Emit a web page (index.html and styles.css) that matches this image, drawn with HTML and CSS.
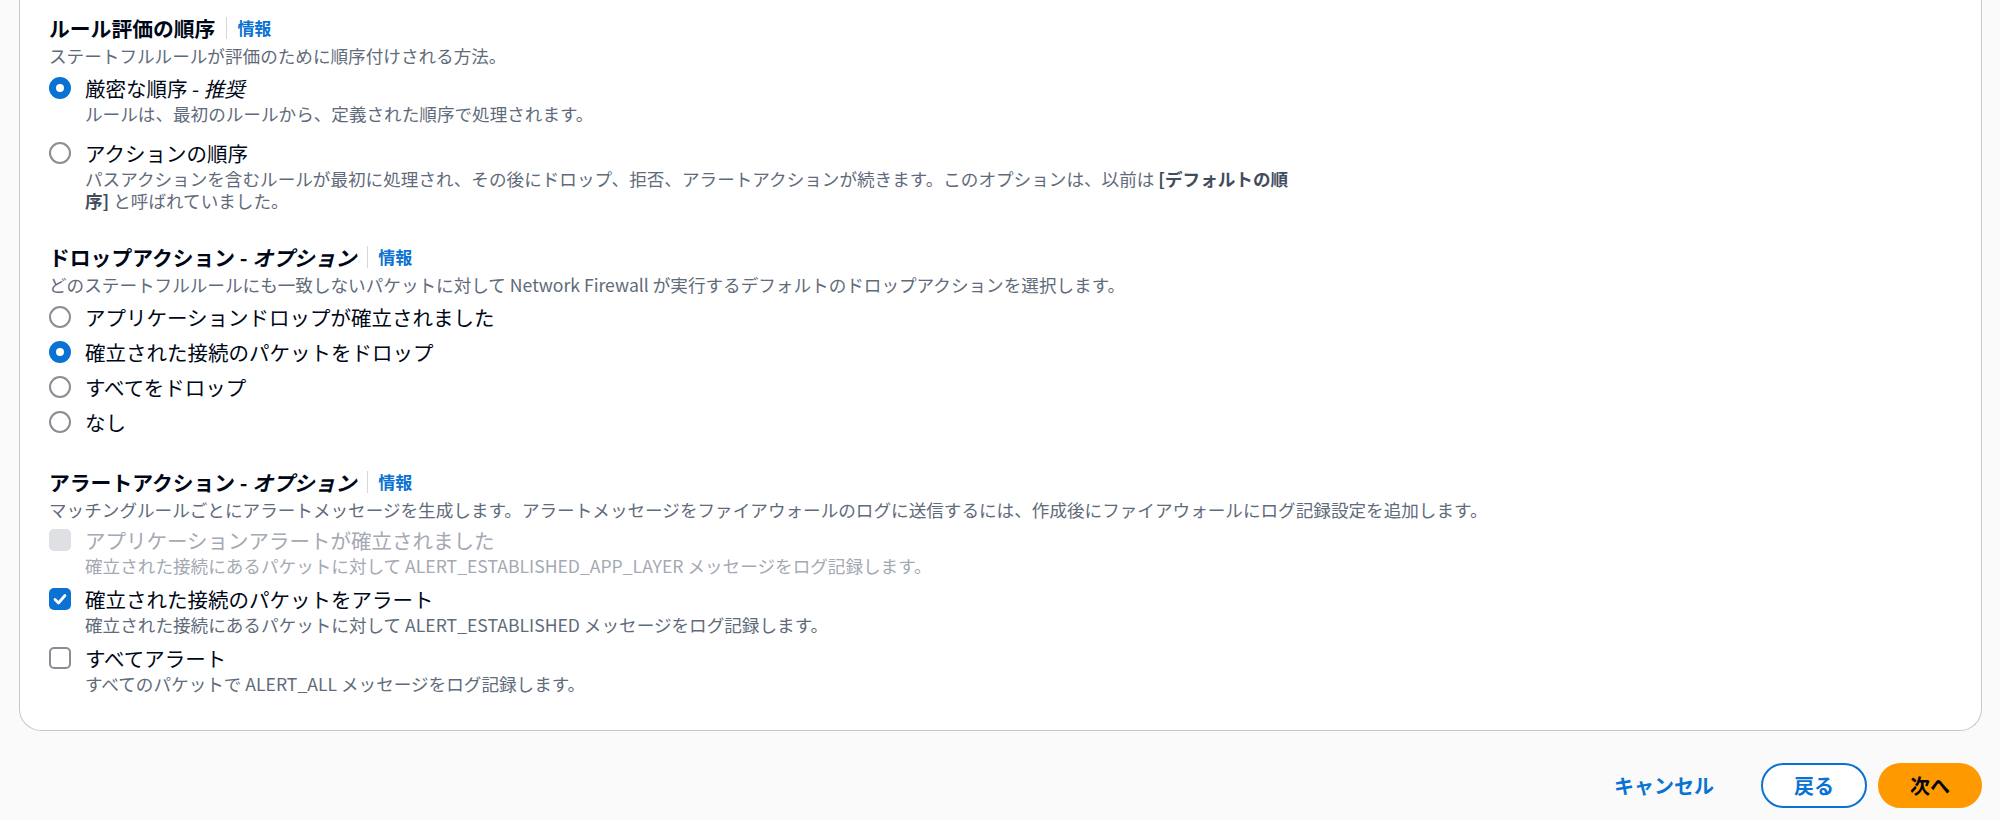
FILE: index.html
```html
<!DOCTYPE html>
<html lang="ja">
<head>
<meta charset="utf-8">
<title>ルールグループ設定</title>
<link rel="stylesheet" href="styles.css">
</head>
<body>
<div class="page">
  <div class="card">
    <section class="section">
      <div class="field-head">
        <h3 class="field-title">ルール評価の順序</h3>
        <span class="divider"></span>
        <a class="info" href="#">情報</a>
      </div>
      <p class="field-desc">ステートフルルールが評価のために順序付けされる方法。</p>
      <div class="options options-spaced">
        <div class="opt">
          <span class="radio radio-on"></span>
          <div>
            <div class="opt-label">厳密な順序 - <em>推奨</em></div>
            <div class="opt-desc">ルールは、最初のルールから、定義された順序で処理されます。</div>
          </div>
        </div>
        <div class="opt">
          <span class="radio"></span>
          <div>
            <div class="opt-label">アクションの順序</div>
            <div class="opt-desc opt-desc-wrap">パスアクションを含むルールが最初に処理され、その後にドロップ、拒否、アラートアクションが続きます。このオプションは、以前は <b>[デフォルトの順序]</b> と呼ばれていました。</div>
          </div>
        </div>
      </div>
    </section>

    <section class="section">
      <div class="field-head">
        <h3 class="field-title">ドロップアクション - <em>オプション</em></h3>
        <span class="divider"></span>
        <a class="info" href="#">情報</a>
      </div>
      <p class="field-desc">どのステートフルルールにも一致しないパケットに対して Network Firewall が実行するデフォルトのドロップアクションを選択します。</p>
      <div class="options options-tight">
        <div class="opt"><span class="radio"></span><div class="opt-label">アプリケーションドロップが確立されました</div></div>
        <div class="opt"><span class="radio radio-on"></span><div class="opt-label">確立された接続のパケットをドロップ</div></div>
        <div class="opt"><span class="radio"></span><div class="opt-label">すべてをドロップ</div></div>
        <div class="opt"><span class="radio"></span><div class="opt-label">なし</div></div>
      </div>
    </section>

    <section class="section">
      <div class="field-head">
        <h3 class="field-title">アラートアクション - <em>オプション</em></h3>
        <span class="divider"></span>
        <a class="info" href="#">情報</a>
      </div>
      <p class="field-desc">マッチングルールごとにアラートメッセージを生成します。アラートメッセージをファイアウォールのログに送信するには、作成後にファイアウォールにログ記録設定を追加します。</p>
      <div class="options options-check">
        <div class="opt opt-disabled">
          <span class="check check-disabled"></span>
          <div>
            <div class="opt-label">アプリケーションアラートが確立されました</div>
            <div class="opt-desc">確立された接続にあるパケットに対して ALERT_ESTABLISHED_APP_LAYER メッセージをログ記録します。</div>
          </div>
        </div>
        <div class="opt">
          <span class="check check-on"><svg viewBox="0 0 22 22" width="22" height="22"><polyline points="6,11.5 9.5,15 16,7.5" fill="none" stroke="#ffffff" stroke-width="2.8" stroke-linecap="round" stroke-linejoin="round"/></svg></span>
          <div>
            <div class="opt-label">確立された接続のパケットをアラート</div>
            <div class="opt-desc">確立された接続にあるパケットに対して ALERT_ESTABLISHED メッセージをログ記録します。</div>
          </div>
        </div>
        <div class="opt">
          <span class="check"></span>
          <div>
            <div class="opt-label">すべてアラート</div>
            <div class="opt-desc">すべてのパケットで ALERT_ALL メッセージをログ記録します。</div>
          </div>
        </div>
      </div>
    </section>
  </div>

  <div class="actions">
    <button class="btn btn-link" type="button">キャンセル</button>
    <button class="btn btn-normal" type="button">戻る</button>
    <button class="btn btn-primary" type="button">次へ</button>
  </div>
</div>
</body>
</html>
```

FILE: styles.css
```css
* { box-sizing: border-box; }

html, body {
  margin: 0;
  padding: 0;
  background: #fafafa;
  font-family: "Noto Sans CJK JP", "Noto Sans", sans-serif;
  color: #000716;
}

.page {
  padding: 0 18px 0 19px;
}

.card {
  background: #ffffff;
  border: 1px solid #c6c6cd;
  border-top: none;
  border-radius: 0 0 22px 22px;
  padding: 13px 29px 35px 29px;
}

.section + .section {
  margin-top: 30px;
}

.field-head {
  display: flex;
  align-items: center;
  height: 30px;
}

.field-title {
  margin: 0;
  font-size: 20.8px;
  line-height: 30px;
  font-weight: 700;
  color: #000716;
}

.field-title em,
.opt-label em {
  font-style: italic;
}

.divider {
  width: 1px;
  height: 22px;
  background: #d5d7dc;
  margin: 0 10px 0 11px;
}

.info {
  font-size: 17px;
  line-height: 30px;
  font-weight: 700;
  color: #0972d3;
  text-decoration: none;
}

.field-desc {
  margin: 2px 0 0 0;
  font-size: 17.6px;
  line-height: 22px;
  color: #5f6b7a;
}

.options {
  display: flex;
  flex-direction: column;
  margin-top: 6px;
}

.options-spaced { gap: 13px; }
.options-tight { gap: 5px; }
.options-check { gap: 7px; margin-top: 4px; }

.opt {
  display: grid;
  grid-template-columns: 22px 1fr;
  column-gap: 14px;
  align-items: start;
}

.opt-label {
  font-size: 20.5px;
  line-height: 30px;
  color: #000716;
}

.opt-desc {
  font-size: 17.6px;
  line-height: 22px;
  color: #5f6b7a;
}

.opt-desc b {
  font-weight: 700;
  color: #414d5c;
}

.opt-desc-wrap {
  max-width: 1215px;
}

.opt-disabled .opt-label,
.opt-disabled .opt-desc {
  color: #a4a9b3;
}

.radio {
  display: block;
  width: 22px;
  height: 22px;
  margin-top: 4px;
  border-radius: 50%;
  border: 2px solid #8c8c94;
  background: #ffffff;
}

.radio-on {
  border: 7px solid #0972d3;
}

.check {
  display: block;
  width: 22px;
  height: 22px;
  margin-top: 4px;
  border-radius: 5px;
  border: 2px solid #8c8c94;
  background: #ffffff;
}

.check svg { display: block; }

.check-on {
  border: none;
  background: #0972d3;
}

.check-disabled {
  border: none;
  background: #dfe0e4;
}

.actions {
  display: flex;
  justify-content: flex-end;
  align-items: center;
  gap: 11px;
  margin-top: 32px;
}

.btn {
  font-family: "Noto Sans CJK JP", "Noto Sans", sans-serif;
  font-size: 20px;
  font-weight: 700;
  line-height: 31px;
  padding: 5px 31px;
  border-radius: 24px;
  border: 2px solid transparent;
  background: transparent;
  cursor: pointer;
}

.btn-link {
  color: #0972d3;
  padding: 5px 34px 5px 31px;
}

.btn-normal {
  background: #ffffff;
  border-color: #0972d3;
  color: #0972d3;
}

.btn-primary {
  background: #ff9900;
  border-color: #ff9900;
  color: #000716;
  padding: 5px 30px;
}
```
